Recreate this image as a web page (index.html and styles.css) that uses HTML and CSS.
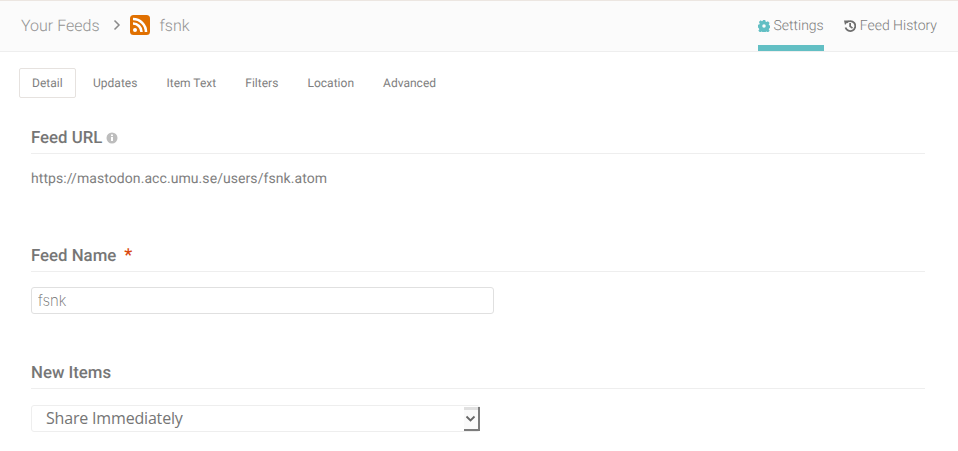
FILE: index.html
```html
<!DOCTYPE html>
<html lang="en">
<head>
<meta charset="utf-8">
<title>fsnk</title>
<link rel="stylesheet" href="styles.css">
</head>
<body>
<header class="topbar">
  <nav class="crumbs">
    <span class="crumb">Your Feeds</span>
    <svg class="chev" viewBox="0 0 8 12" width="8" height="12"><path d="M1.500 1.500 6 6l-4.500 4.500" fill="none" stroke="#8a8a8a" stroke-width="1.500"/></svg>
    <svg class="rss" viewBox="0 0 20 20" width="20" height="20"><rect width="20" height="20" rx="3.500" fill="#e07000"/><circle cx="5" cy="15" r="2" fill="#fff"/><path d="M3 8.500a8.500 8.500 0 0 1 8.500 8.500M3 4a13 13 0 0 1 13 13" fill="none" stroke="#fff" stroke-width="2.600"/></svg>
    <span class="crumb">fsnk</span>
  </nav>
  <div class="views">
    <a class="view active">
      <svg viewBox="0 0 24 24" width="12" height="12"><path fill="#62bfc4" fill-rule="evenodd" d="M9.500 0h5l.6 3.200 2 .9 2.700-1.800 3.500 3.500-1.800 2.700.9 2 3.200.6v5l-3.200.6-.9 2 1.800 2.700-3.500 3.500-2.700-1.800-2 .9-.6 3.200h-5l-.6-3.200-2-.9-2.700 1.800-3.500-3.500 1.800-2.700-.9-2L-.6 14.500v-5l3.200-.6.9-2-1.800-2.700 3.500-3.500 2.700 1.800 2-.9zM12 8.500a3.500 3.500 0 1 0 0 7 3.500 3.500 0 0 0 0-7z"/></svg>
      Settings
    </a>
    <a class="view history">
      <svg viewBox="0 0 24 24" width="12" height="12"><path fill="none" stroke="#6e6e6e" stroke-width="3.600" d="M5 5.500A10 10 0 1 1 3 15"/><path fill="#6e6e6e" d="M0 1l10 0-8 9zM10.500 6h3.500v6l4 3-2 2.500-5.500-4z"/></svg>
      Feed History
    </a>
  </div>
</header>
<ul class="tabs">
  <li class="tab current">Detail</li>
  <li class="tab">Updates</li>
  <li class="tab">Item Text</li>
  <li class="tab">Filters</li>
  <li class="tab">Location</li>
  <li class="tab">Advanced</li>
</ul>
<main class="form">
  <section class="field url">
    <h2 class="label">Feed URL <svg class="info" viewBox="0 0 12 12" width="12" height="12"><circle cx="6" cy="6" r="5.500" fill="#bdbdbd"/><rect x="5" y="5" width="2" height="4" fill="#fff"/><rect x="5" y="2.500" width="2" height="1.600" fill="#fff"/></svg></h2>
    <p class="value">https://mastodon.acc.umu.se/users/fsnk.atom</p>
  </section>
  <section class="field name">
    <h2 class="label">Feed Name <span class="req">*</span></h2>
    <input class="text" type="text" value="fsnk">
  </section>
  <section class="field items">
    <h2 class="label">New Items</h2>
    <div class="select-wrap">
      <select class="select"><option>Share Immediately</option></select>
      <svg class="arrow" viewBox="0 0 16 24" width="16" height="24"><rect width="16" height="3" fill="#e0e0e0"/><rect y="3" width="14" height="19" fill="#fafafa"/><rect x="14" width="2" height="24" fill="#7c7c7c"/><rect y="22" width="16" height="2" fill="#7c7c7c"/><path d="M2.500 9.500 6.500 13.500 10.500 9.500" fill="none" stroke="#666" stroke-width="1.800"/></svg>
    </div>
  </section>
</main>
</body>
</html>
```
FILE: styles.css
```css
* { box-sizing: border-box; }
html, body { margin: 0; padding: 0; height: 451px; overflow: hidden; background: #fff; }
body { font-family: Roboto, sans-serif; color: #808080; border-top: 1px solid #ece6e1; text-rendering: geometricPrecision; }
.topbar { height: 51px; background: #fbfbfb; border-bottom: 1px solid #eee; display: flex; justify-content: space-between; padding: 0 21px; }
.crumbs { display: flex; align-items: center; font-size: 16px; font-weight: 300; color: #949494; padding-bottom: 2px; }
.chev { margin: 0 9px 0 13px; }
.rss { margin-right: 10px; }
.views { display: flex; gap: 20px; font-size: 14px; font-weight: 300; }
.view { display: flex; align-items: center; gap: 3px; height: 50px; color: #7c7c7c; position: relative; }
.view.history { gap: 4px; }
.view.active::after { content: ""; position: absolute; left: 0; right: 0; bottom: 0; height: 6px; background: #62bfc4; }
.tabs { list-style: none; margin: 16px 0 0 19px; padding: 0; display: flex; gap: 3px; font-size: 12px; letter-spacing: .02px; }
.tab { height: 30px; line-height: 28px; padding: 0 12px; border: 1px solid transparent; border-radius: 2px; }
.tab.current { border-color: #e6e2df; margin-right: 1px; width: 57px; padding: 0 12px; }
.form { padding: 0 33px 0 31px; }
.label { margin: 0; font-size: 16.800px; font-weight: 500; line-height: 20px; padding-top: 1px; padding-bottom: 5px; border-bottom: 1px solid #eee; color: #767676; display: flex; align-items: center; gap: 4px; }
.url { margin-top: 29px; }
.value { margin: 17px 0 0; font-size: 14px; line-height: 16px; letter-spacing: .07px; }
.name { margin-top: 58px; }
.req { color: #d9480f; margin-left: 4px; font-size: 18px; line-height: 20px; }
.text { display: block; margin-top: 15px; width: 463px; height: 27px; padding: 0 6px; border: 1px solid #e0e0e0; border-radius: 3px; font-family: Inter, sans-serif; font-weight: 200; font-size: 15px; color: #707070; background: #fff; }
.items { margin-top: 48px; }
.select-wrap { position: relative; margin-top: 16px; width: 449px; height: 27px; }
.select { display: block; width: 100%; height: 100%; appearance: none; border: 1px solid #eee; border-radius: 3px; background: #fff; font-family: "Open Sans", sans-serif; font-size: 16px; letter-spacing: -.18px; color: #757575; padding: 0 0 2px 14px; }
.arrow { position: absolute; right: 0; top: 2px; pointer-events: none; }
```
